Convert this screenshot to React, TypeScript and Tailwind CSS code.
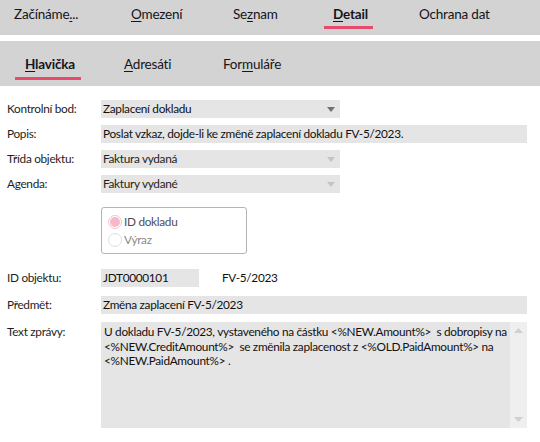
import React from 'react';

const font = { fontFamily: 'Lato, "Noto Sans", sans-serif' };

interface TabProps {
  label: React.ReactNode;
  width: string;
  active?: boolean;
  bar: string;
}

const Tab: React.FC<TabProps> = ({ label, width, active, bar }) => (
  <div className={`relative ${width} shrink-0 whitespace-nowrap`}>
    <span className={active ? 'font-bold' : ''}>{label}</span>
    {active && <div className={`absolute h-[3px] bg-[#e84a6b] ${bar}`} />}
  </div>
);

// text with an access-key underline on one letter
const Key: React.FC<{ pre?: string; k: string; post?: string }> = ({ pre, k, post }) => (
  <>
    {pre}
    <span className="underline underline-offset-2 decoration-1">{k}</span>
    {post}
  </>
);

const Arrow: React.FC<{ disabled?: boolean }> = ({ disabled }) => (
  <svg width="8" height="5" viewBox="0 0 8 5" className="mr-[5px]">
    <path d="M0 0h8L4 5z" fill={disabled ? '#c4c4c4' : '#707070'} />
  </svg>
);

const Label: React.FC<{ children: React.ReactNode }> = ({ children }) => (
  <div className="w-[94px] shrink-0 text-[#1e1e1e] whitespace-nowrap">{children}</div>
);

const Select: React.FC<{ value: string; disabled?: boolean }> = ({ value, disabled }) => (
  <div className="w-[239px] h-[18px] bg-[#e5e5e5] flex items-center justify-between pl-[2px]">
    <span className={disabled ? 'text-[#1e1e1e]' : 'text-[#111]'}>{value}</span>
    <Arrow disabled={disabled} />
  </div>
);

const Radio: React.FC<{ checked?: boolean; label: string; color: string }> = ({ checked, label, color }) => (
  <div className="flex items-center h-[18px]">
    <div
      className={`w-[14px] h-[14px] rounded-full border flex items-center justify-center ${
        checked ? 'border-[#f1c3cf] bg-white' : 'border-[#e0e0e0] bg-white'
      }`}
    >
      {checked && <div className="w-[10px] h-[10px] rounded-full bg-[#f6b9c8]" />}
    </div>
    <span className={`ml-[2px] ${color}`}>{label}</span>
  </div>
);

export default function App() {
  return (
    <div
      className="w-[540px] h-[442px] bg-white overflow-hidden text-[11.8px] tracking-[-0.3px] leading-[14px]"
      style={font}
    >
      {/* main tabs */}
      <div className="h-[35px] bg-[#d3d3d3] flex items-start pt-[5px] pl-[14px] text-[13.5px] tracking-[-0.2px] leading-[18px] text-[#151520]">
        <Tab width="w-[117px]" bar="" label={<Key pre="Začínáme" k="." post=".." />} />
        <Tab width="w-[102px]" bar="" label={<Key k="O" post="mezení" />} />
        <Tab width="w-[100px]" bar="" label={<Key pre="Se" k="z" post="nam" />} />
        <Tab width="w-[86px]" active bar="left-[-9px] w-[49px] top-[21px]" label={<Key k="D" post="etail" />} />
        <Tab width="w-[80px]" bar="" label="Ochrana dat" />
      </div>
      <div className="h-[6px]" />
      {/* sub tabs */}
      <div className="h-[45px] bg-[#d3d3d3] flex items-start pt-[14px] pl-[25px] text-[13.5px] tracking-[-0.2px] leading-[18px] text-[#151520]">
        <Tab width="w-[99px]" active bar="left-[-10px] w-[66px] top-[22px]" label={<Key k="H" post="lavička" />} />
        <Tab width="w-[99px]" bar="" label={<Key k="A" post="dresáti" />} />
        <Tab width="w-[90px]" bar="" label={<Key pre="For" k="m" post="uláře" />} />
      </div>

      {/* form */}
      <div className="pl-[7px] pr-[13px] pt-[14px] flex flex-col">
        <div className="flex items-center h-[18px]">
          <Label>Kontrolní bod:</Label>
          <Select value="Zaplacení dokladu" />
        </div>
        <div className="flex items-center h-[18px] mt-[7px]">
          <Label>Popis:</Label>
          <div className="flex-1 h-[18px] bg-[#e5e5e5] pl-[2px] flex items-center text-[#111]">
            Poslat vzkaz, dojde-li ke změně zaplacení dokladu FV-5/2023.
          </div>
        </div>
        <div className="flex items-center h-[18px] mt-[7px]">
          <Label>Třída objektu:</Label>
          <Select value="Faktura vydaná" disabled />
        </div>
        <div className="flex items-center h-[18px] mt-[7px]">
          <Label>Agenda:</Label>
          <Select value="Faktury vydané" disabled />
        </div>

        <div className="flex mt-[14px]">
          <div className="w-[94px] shrink-0" />
          <div className="w-[146px] h-[47px] border border-[#b4b4b4] rounded-[3px] pl-[6px] pt-[5px]">
            <Radio checked label="ID dokladu" color="text-[#4e4e5a]" />
            <Radio label="Výraz" color="text-[#8a8a8a]" />
          </div>
        </div>

        <div className="flex items-center h-[18px] mt-[15px]">
          <Label>ID objektu:</Label>
          <div className="w-[98px] h-[18px] bg-[#e5e5e5] pl-[2px] flex items-center text-[#111]">JDT0000101</div>
          <div className="ml-[23px] text-[#111]">FV-5/2023</div>
        </div>
        <div className="flex items-center h-[18px] mt-[9px]">
          <Label>Předmět:</Label>
          <div className="flex-1 h-[18px] bg-[#e5e5e5] pl-[2px] flex items-center text-[#111]">
            Změna zaplacení FV-5/2023
          </div>
        </div>
        <div className="flex items-start mt-[8px]">
          <div className="pt-[3px]">
            <Label>Text zprávy:</Label>
          </div>
          <div className="flex-1 h-[106px] bg-[#e5e5e5] flex">
            <div className="flex-1 pl-[3px] pt-[3px] pr-[2px] leading-[14.5px] text-[#111]">
              U dokladu FV-5/2023, vystaveného na částku &lt;%NEW.Amount%&gt;&nbsp; s dobropisy na &lt;%NEW.CreditAmount%&gt;&nbsp; se změnila zaplacenost z &lt;%OLD.PaidAmount%&gt; na &lt;%NEW.PaidAmount%&gt; .
            </div>
            <div className="w-[17px] bg-[#efefef] flex flex-col justify-between items-center py-[6px]">
              <svg width="9" height="5" viewBox="0 0 9 5">
                <path d="M0 5L4.5 0L9 5z" fill="#d0d0d0" />
              </svg>
              <svg width="9" height="5" viewBox="0 0 9 5">
                <path d="M0 0h9L4.5 5z" fill="#d0d0d0" />
              </svg>
            </div>
          </div>
        </div>
      </div>
    </div>
  );
}
